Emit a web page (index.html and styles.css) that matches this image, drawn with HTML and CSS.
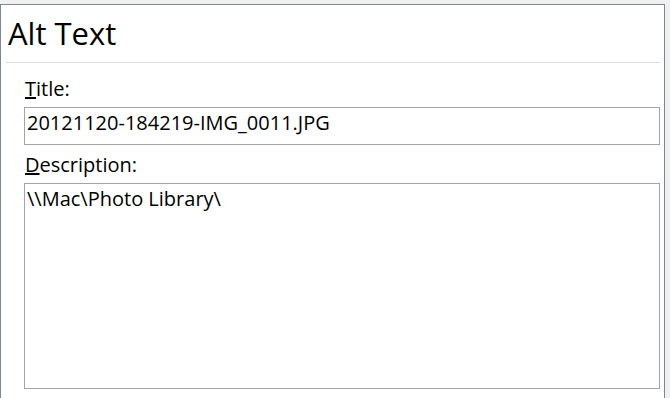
FILE: index.html
```html
<!DOCTYPE html>
<html>
<head>
<meta charset="utf-8">
<link rel="stylesheet" href="styles.css">
</head>
<body>
<div class="panel">
  <h1 class="heading">Alt Text</h1>
  <div class="divider"></div>
  <div class="form">
    <label class="label first"><u>T</u>itle:</label>
    <div class="field">20121120-184219-IMG_0011.JPG</div>
    <label class="label"><u>D</u>escription:</label>
    <div class="field area">\\Mac\Photo Library\</div>
  </div>
</div>
</body>
</html>
```

FILE: styles.css
```css
html, body {
  margin: 0;
  padding: 0;
  background: #f0f0f0;
  font-family: "Open Sans", "Noto Sans", sans-serif;
  color: #000;
}
.panel {
  margin-top: 4px;
  width: 663px;
  height: 394px;
  background: #fff;
  border: 1px solid #7f8792;
  border-bottom: none;
  display: flex;
  flex-direction: column;
}
.heading {
  margin: 0;
  padding: 8px 0 0 7px;
  font-weight: normal;
  font-size: 31px;
  line-height: 40px;
}
.divider {
  height: 1px;
  background: #dcdcdc;
  margin: 9px 4px 0 5px;
}
.form {
  display: flex;
  flex-direction: column;
  margin: 0 4px 0 23px;
}
.label {
  font-size: 20px;
  line-height: 26px;
  padding-left: 1px;
  margin: 7px 0 5px;
}
.label.first {
  margin-top: 13px;
}
.field {
  box-sizing: border-box;
  border: 1px solid #a5a5a8;
  height: 38px;
  font-size: 20px;
  line-height: 29px;
  padding: 0 2px;
  white-space: pre;
}
.field.area {
  height: 206px;
}
```
